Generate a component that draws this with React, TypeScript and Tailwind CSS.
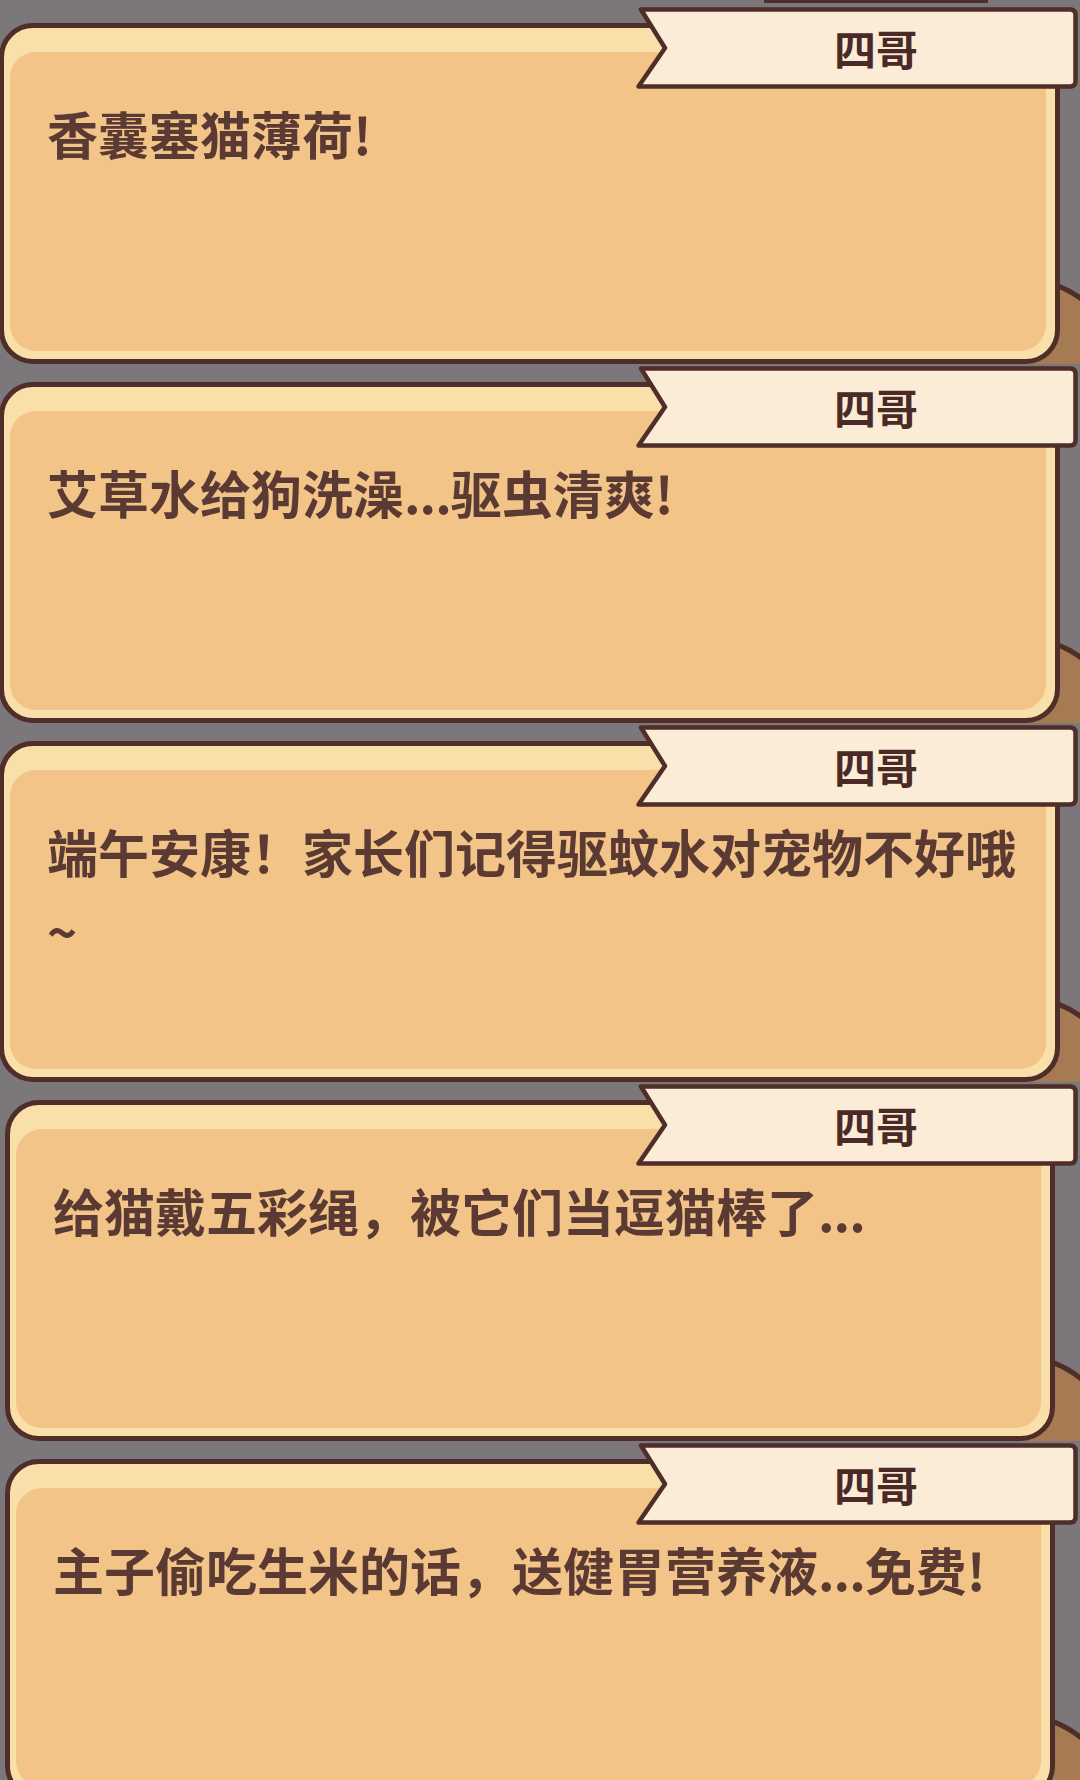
import React from "react";

type PanelData = { text: string; shift: boolean };

const panels: PanelData[] = [
  { text: "香囊塞猫薄荷!", shift: false },
  { text: "艾草水给狗洗澡...驱虫清爽!", shift: false },
  { text: "端午安康！家长们记得驱蚊水对宠物不好哦~", shift: false },
  { text: "给猫戴五彩绳，被它们当逗猫棒了...", shift: true },
  { text: "主子偷吃生米的话，送健胃营养液...免费!", shift: true },
];

function Ribbon({ shift }: { shift: boolean }) {
  return (
    <div
      className={`absolute top-[-16px] h-[82px] w-[442px] ${
        shift ? "left-[631px]" : "left-[637px]"
      }`}
    >
      <svg width="442" height="82" viewBox="0 0 442 82" className="absolute inset-0">
        <path
          d="M5 2.5 H434 Q439.5 2.5 439.5 8 V74 Q439.5 79.5 434 79.5 H2.5 L29 41 Z"
          fill="#fbecd8"
          stroke="#4f2d29"
          strokeWidth="4.5"
          strokeLinejoin="round"
        />
      </svg>
      <div className="absolute inset-0 flex items-center justify-center pl-[38px]">
        <span className="text-[42px] font-bold leading-none text-[#4a2a26]">四哥</span>
      </div>
    </div>
  );
}

function Message({ text }: { text: string }) {
  const parts = text.split("...");
  return (
    <p className="text-[51px] font-bold leading-[79px] text-[#5b3a33]">
      {parts.map((part, i) => (
        <React.Fragment key={i}>
          {part}
          {i < parts.length - 1 && <span className="tracking-[-1px]">...</span>}
        </React.Fragment>
      ))}
    </p>
  );
}

function Panel({ text, shift }: PanelData) {
  return (
    <div className={`relative h-[341px] ${shift ? "ml-[5px] w-[1050px]" : "-ml-[1px] w-[1061px]"}`}>
      {/* brown shape peeking out behind the panel */}
      <div
        className={`absolute top-[255px] h-[86px] w-[110px] overflow-hidden -z-10 ${
          shift ? "left-[970px]" : "left-[980px]"
        }`}
      >
        <div className="absolute left-[-68px] top-[-2px] h-[216px] w-[216px] rounded-full border-[5px] border-[#4f2d29] bg-[#a67a53]" />
      </div>

      <div className="h-full rounded-[34px] border-[5px] border-[#4f2d29] bg-[#f9dfaa] pb-[8px] pl-[6px] pr-[9px] pt-[24px]">
        <div className="h-full rounded-[26px] bg-[#f2c488] pl-[37px] pr-[24px] pt-[42px]">
          <Message text={text} />
        </div>
      </div>

      <Ribbon shift={shift} />
    </div>
  );
}

export default function App() {
  return (
    <div className="relative z-0 h-[1780px] w-[1080px] overflow-hidden bg-[#7b777a] font-['Noto_Sans_CJK_SC',sans-serif]">
      <div className="absolute left-[764px] top-0 h-[3px] w-[224px] bg-[#4f2d29]" />
      <div className="flex flex-col gap-[18px] pt-[23px]">
        {panels.map((p, i) => (
          <Panel key={i} text={p.text} shift={p.shift} />
        ))}
      </div>
    </div>
  );
}
